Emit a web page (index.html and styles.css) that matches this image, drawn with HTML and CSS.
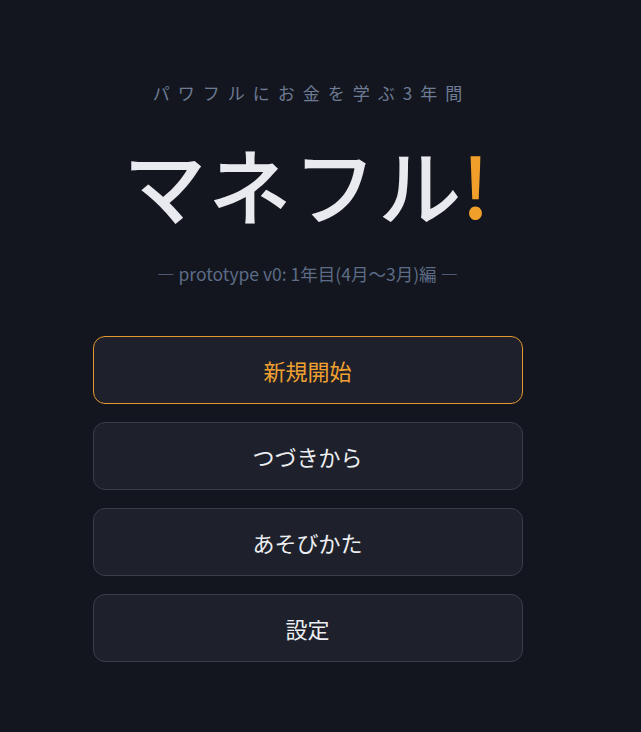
FILE: index.html
```html
<!DOCTYPE html>
<html lang="ja">
<head>
<meta charset="utf-8">
<link rel="stylesheet" href="styles.css">
</head>
<body>
<main class="screen">
  <p class="tagline">パワフルにお金を学ぶ3年間</p>
  <h1 class="title">マネフル<span class="bang">!</span></h1>
  <p class="sub">— prototype v0: 1年目(4月〜3月)編 —</p>
  <nav class="menu">
    <button class="btn primary">新規開始</button>
    <button class="btn">つづきから</button>
    <button class="btn">あそびかた</button>
    <button class="btn">設定</button>
  </nav>
</main>
</body>
</html>
```
FILE: styles.css
```css
html, body {
  margin: 0;
  padding: 0;
  background: #13161e;
  height: 100%;
}
body {
  font-family: "Noto Sans CJK JP", "Noto Sans", sans-serif;
  color: #e8e9ee;
}
.screen {
  width: 615px;
  display: flex;
  flex-direction: column;
  align-items: center;
  padding-top: 78px;
}
.tagline {
  margin: 0;
  font-size: 17px;
  line-height: 30px;
  letter-spacing: 8px;
  padding-left: 8px;
  color: #6d7b94;
}
.title {
  margin: 20px 0 0;
  font-size: 83px;
  line-height: 110px;
  font-weight: 500;
  letter-spacing: 2px;
  color: #e9eaef;
}
.bang {
  color: #f0a02a;
  margin-left: -2px;
}
.sub {
  margin: 24px 0 0;
  font-size: 17.5px;
  line-height: 24px;
  color: #5d6c86;
}
.menu {
  margin-top: 50px;
  display: flex;
  flex-direction: column;
  gap: 18px;
  width: 430px;
}
.btn {
  height: 68px;
  border-radius: 12px;
  border: 1px solid #393e4b;
  background: #1e212b;
  color: #eceef2;
  font-family: "Noto Sans CJK JP", "Noto Sans", sans-serif;
  font-size: 22px;
}
.btn.primary {
  border-color: #e5962c;
  color: #f0a030;
}
```
